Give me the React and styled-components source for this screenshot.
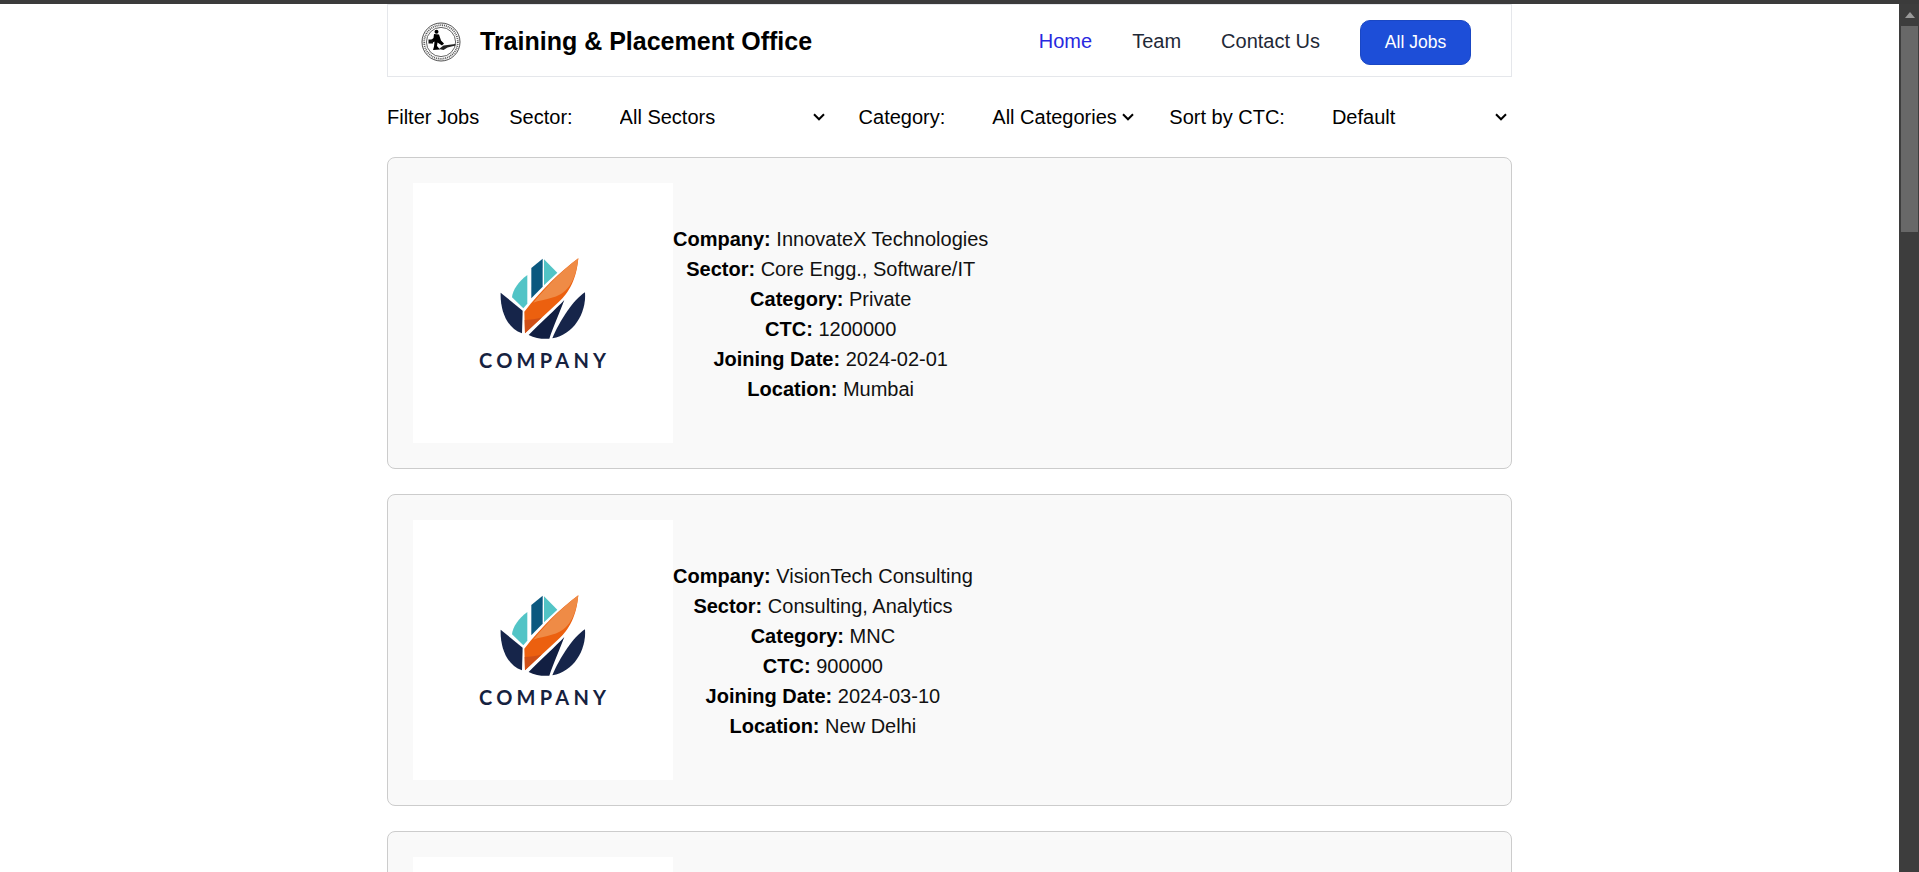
import React from 'react';
import styled, { createGlobalStyle } from 'styled-components';

const GlobalStyle = createGlobalStyle`
  html, body {
    margin: 0;
    height: 100%;
    overflow: hidden;
    background: #fff;
    font-family: "Liberation Sans", Arial, sans-serif;
  }
`;

const chevron =
  "url(\"data:image/svg+xml,%3Csvg xmlns='http://www.w3.org/2000/svg' width='12' height='8' viewBox='0 0 12 8'%3E%3Cpath d='M1 1.300l5 5 5-5' fill='none' stroke='%23000' stroke-width='2'/%3E%3C/svg%3E\")";

const Shell = styled.div`
  display: flex;
  flex-direction: column;
  height: 100vh;
`;

const TopStrip = styled.div`
  flex: none;
  height: 4px;
  background: #3b3b3b;
`;

const Body = styled.div`
  display: flex;
  flex: 1;
  min-height: 0;
`;

const Main = styled.main`
  flex: 1;
  min-width: 0;
  overflow: hidden;
`;

const Container = styled.div`
  width: 1125px;
  margin: 0 auto;
`;

const ScrollTrack = styled.div`
  flex: none;
  box-sizing: border-box;
  width: 20px;
  padding: 0 1px 0 2px;
  background: #3d3d3d;
  display: flex;
  flex-direction: column;
  align-items: stretch;
`;

const ScrollArrow = styled.div`
  flex: none;
  height: 22px;
  display: flex;
  align-items: center;
  justify-content: center;
  &::before {
    content: '';
    border-left: 5px solid transparent;
    border-right: 5px solid transparent;
    border-bottom: 6px solid #9a9a9a;
  }
`;

const ScrollThumb = styled.div`
  flex: none;
  height: 206px;
  background: #686868;
`;

const Nav = styled.nav`
  box-sizing: border-box;
  height: 73px;
  padding: 2px 40px 0 33px;
  display: flex;
  align-items: center;
  border: 1px solid #e5e7eb;
`;

const Brand = styled.div`
  display: flex;
  align-items: center;
  gap: 19px;
  flex: 1;
`;

const Title = styled.span`
  font-size: 25px;
  font-weight: 700;
  color: #000;
`;

const NavLinks = styled.div`
  display: flex;
  align-items: center;
  gap: 40px;
`;

const NavLink = styled.a`
  font-size: 20px;
  color: ${(p) => (p.$active ? '#2828e0' : '#1f2937')};
`;

const JobsButton = styled.button`
  box-sizing: border-box;
  width: 111px;
  height: 45px;
  margin-top: 2px;
  border: 1px solid #1a47c4;
  border-radius: 10px;
  background: #1d4ed8;
  color: #fff;
  font-family: inherit;
  font-size: 17.5px;
`;

const FilterBar = styled.div`
  height: 80px;
  display: flex;
  align-items: center;
  font-size: 20px;
  color: #000;
  white-space: nowrap;
`;

const FilterTitle = styled.span`
  flex: none;
  margin-right: 30px;
`;

const FilterLabel = styled.label`
  flex: none;
  margin-right: ${(p) => p.$gap}px;
`;

const FilterSelect = styled.select`
  appearance: none;
  box-sizing: border-box;
  flex: none;
  width: ${(p) => p.$width}px;
  margin-right: ${(p) => p.$after}px;
  padding: 8px 0 8px 8px;
  border: none;
  outline: none;
  background: #fff ${chevron} no-repeat right 7px center;
  color: #000;
  font-family: inherit;
  font-size: 20px;
`;

const JobList = styled.div`
  display: flex;
  flex-direction: column;
  gap: 25px;
`;

const JobCard = styled.article`
  box-sizing: border-box;
  flex: none;
  height: 312px;
  padding: 25px;
  display: flex;
  align-items: center;
  background: #f9f9f9;
  border: 1px solid #ccc;
  border-radius: 8px;
`;

const LogoBox = styled.div`
  flex: none;
  width: 260px;
  height: 260px;
  background: #fff;
`;

const Details = styled.div`
  padding-top: 1px;
  font-size: 20px;
  line-height: 30px;
  text-align: center;
  color: #111;
`;

const Line = styled.div`
  & > strong {
    color: #000;
  }
`;

const CrestMark = () => (
  <svg width="40" height="40" viewBox="0 0 40 40" aria-hidden="true">
    <circle cx="20" cy="20" r="19" fill="#fff" stroke="#222" strokeWidth="0.8" />
    <circle cx="20" cy="20" r="16.8" fill="none" stroke="#555" strokeWidth="1.8" strokeDasharray="1 0.9" />
    <circle cx="20" cy="20" r="14.6" fill="#fff" stroke="#222" strokeWidth="0.7" />
    <circle cx="15.500" cy="9.800" r="2" fill="#000" />
    <path d="M13 12l5 .5 2 6 3 3-2 2-4.500-3 -.5 3.500 3 3.500-7 .5 1-3.500 .5-5-2.500 1.500-1.500-2.500 3-2.500z" fill="#000" />
    <rect x="7.500" y="17.500" width="4.500" height="4" fill="#111" />
    <path d="M18 27l4.500-3.500 12-1.500 0 1.500-8 2-4 2.500z" fill="#222" />
  </svg>
);

const CompanyLogo = () => (
  <svg width="260" height="260" viewBox="0 0 260 260" aria-hidden="true">
    <g transform="translate(57 57) scale(0.3333)">
      <path d="M172 105C145 125 128 150 126 172L160 205L172 191Z" fill="#52c4c6" />
      <path d="M218 56L184 84L184 175L218 140Z" fill="#0b587f" />
      <path d="M222 58L262 98L222 136Z" fill="#52c4c6" />
      <path d="M325 55C318 130 290 165 262 190L165 280L163 215C215 150 270 95 325 55Z" fill="#ec600f" />
      <path d="M325 55C318 120 295 160 250 172C225 180 205 182 190 188C230 140 275 92 325 55Z" fill="#ef8b46" />
      <path d="M164 240C180 240 200 238 216 232L165 280Z" fill="#cf4f17" />
      <path d="M92 158L158 212L156 280C110 265 90 210 92 158Z" fill="#16254a" />
      <path d="M283 180C260 205 210 250 176 285C195 295 220 298 238 296C250 260 270 215 283 180Z" fill="#121f42" />
      <path d="M345 157C310 180 270 240 247 295C310 285 350 220 345 157Z" fill="#16254a" />
    </g>
    <text
      x="66"
      y="185"
      textLength="127"
      lengthAdjust="spacing"
      fontFamily="Lato, sans-serif"
      fontWeight="700"
      fontSize="20"
      fill="#16223f"
    >
      COMPANY
    </text>
  </svg>
);

const jobs = [
  {
    company: 'InnovateX Technologies',
    sector: 'Core Engg., Software/IT',
    category: 'Private',
    ctc: '1200000',
    date: '2024-02-01',
    location: 'Mumbai',
  },
  {
    company: 'VisionTech Consulting',
    sector: 'Consulting, Analytics',
    category: 'MNC',
    ctc: '900000',
    date: '2024-03-10',
    location: 'New Delhi',
  },
];

const App = () => (
  <Shell>
    <GlobalStyle />
    <TopStrip />
    <Body>
      <Main>
        <Container>
          <Nav>
            <Brand>
              <CrestMark />
              <Title>Training &amp; Placement Office</Title>
            </Brand>
            <NavLinks>
              <NavLink $active>Home</NavLink>
              <NavLink>Team</NavLink>
              <NavLink>Contact Us</NavLink>
              <JobsButton>All Jobs</JobsButton>
            </NavLinks>
          </Nav>
          <FilterBar>
            <FilterTitle>Filter Jobs</FilterTitle>
            <FilterLabel $gap={39}>Sector:</FilterLabel>
            <FilterSelect $width={220} $after={27}>
              <option>All Sectors</option>
            </FilterSelect>
            <FilterLabel $gap={39}>Category:</FilterLabel>
            <FilterSelect $width={157} $after={28}>
              <option>All Categories</option>
            </FilterSelect>
            <FilterLabel $gap={39}>Sort by CTC:</FilterLabel>
            <FilterSelect $width={190} $after={0}>
              <option>Default</option>
            </FilterSelect>
          </FilterBar>
          <JobList>
            {jobs.map((job) => (
              <JobCard key={job.company}>
                <LogoBox>
                  <CompanyLogo />
                </LogoBox>
                <Details>
                  <Line><strong>Company:</strong> {job.company}</Line>
                  <Line><strong>Sector:</strong> {job.sector}</Line>
                  <Line><strong>Category:</strong> {job.category}</Line>
                  <Line><strong>CTC:</strong> {job.ctc}</Line>
                  <Line><strong>Joining Date:</strong> {job.date}</Line>
                  <Line><strong>Location:</strong> {job.location}</Line>
                </Details>
              </JobCard>
            ))}
            <JobCard>
              <LogoBox />
            </JobCard>
          </JobList>
        </Container>
      </Main>
      <ScrollTrack>
        <ScrollArrow />
        <ScrollThumb />
      </ScrollTrack>
    </Body>
  </Shell>
);

export default App;
